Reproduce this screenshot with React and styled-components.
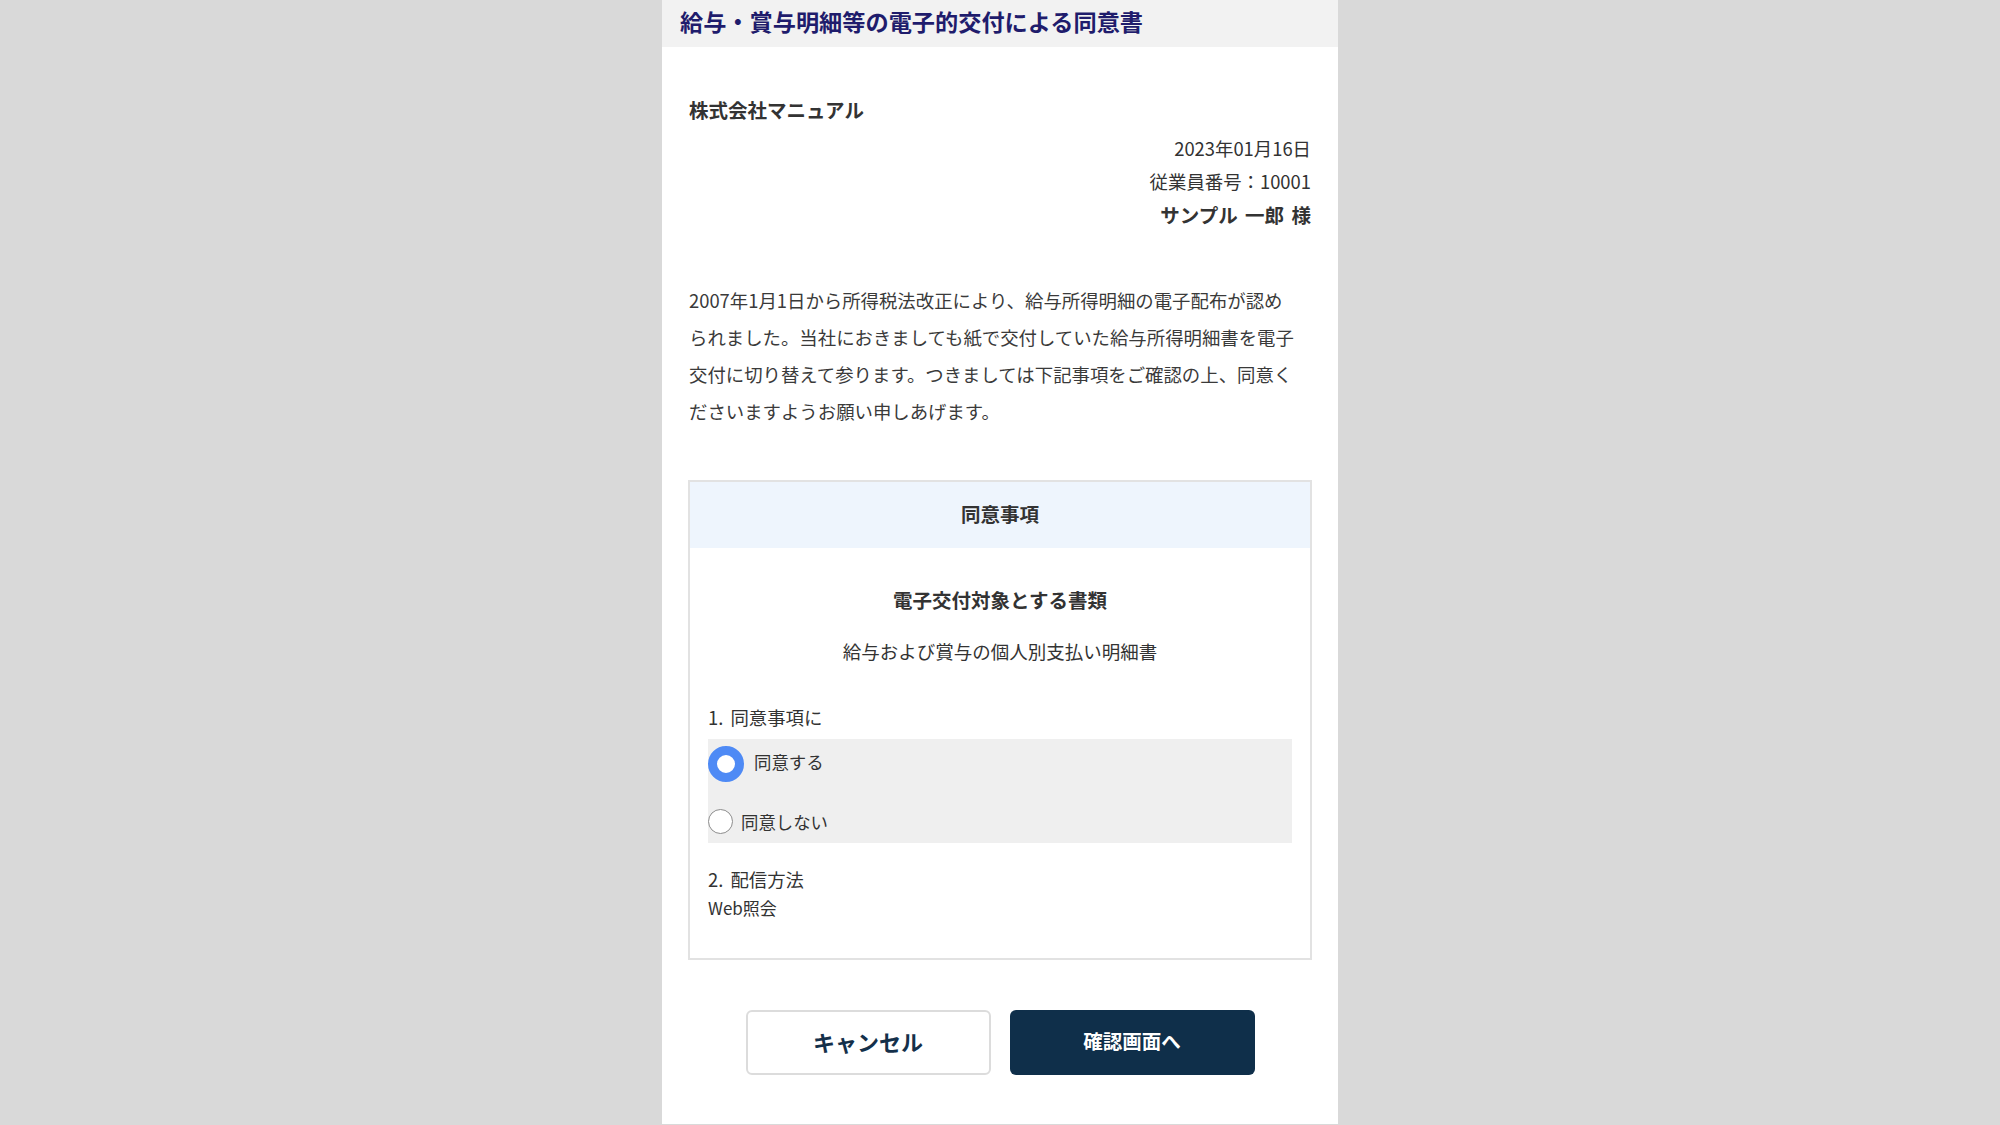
import React from "react";
import styled, { createGlobalStyle } from "styled-components";

const GlobalStyle = createGlobalStyle`
  html, body {
    margin: 0;
    padding: 0;
    background: #d9d9d9;
  }
  body {
    font-family: "Noto Sans CJK JP", "Noto Sans", sans-serif;
    color: #333333;
  }
`;

const Page = styled.div`
  display: flex;
  justify-content: center;
`;

const Sheet = styled.div`
  width: 676px;
  background: #ffffff;
  display: flex;
  flex-direction: column;
`;

const Header = styled.header`
  background: #f2f2f2;
  padding: 7px 18px 12px;
  height: 47px;
  box-sizing: border-box;
`;

const Title = styled.h1`
  margin: 0;
  font-size: 23.2px;
  line-height: 28px;
  font-weight: 700;
  color: #1f1c6c;
`;

const Body = styled.main`
  padding: 48px 27px 49px 27px;
  display: flex;
  flex-direction: column;
`;

const Company = styled.div`
  font-size: 19.5px;
  font-weight: 700;
  line-height: 30px;
  color: #333;
`;

const Recipient = styled.div`
  margin-top: 7px;
  display: flex;
  flex-direction: column;
  align-items: flex-end;
`;

const RecipientLine = styled.div`
  font-size: ${(p) => (p.$strong ? "19.5px" : "18.4px")};
  font-weight: ${(p) => (p.$strong ? 700 : 400)};
  line-height: 33px;
  color: #333;
  word-spacing: ${(p) => (p.$strong ? "3px" : "0")};
`;

const Lead = styled.p`
  margin: 51px 0 0;
  font-size: 18.4px;
  line-height: 37px;
  color: #3a3a3a;
`;

const Box = styled.section`
  margin: 50px -1px 0 -1px;
  border: 2px solid #e2e2e2;
`;

const BoxHead = styled.div`
  background: #eef5fd;
  height: 66px;
  display: flex;
  align-items: center;
  justify-content: center;
  font-size: 19.5px;
  font-weight: 700;
  color: #333;
  padding-bottom: 3px;
  box-sizing: border-box;
`;

const BoxBody = styled.div`
  padding: 37px 18px 37px;
  display: flex;
  flex-direction: column;
`;

const Center = styled.div`
  text-align: center;
  font-size: ${(p) => (p.$strong ? "19.5px" : "18.5px")};
  font-weight: ${(p) => (p.$strong ? 700 : 400)};
  line-height: 30px;
  margin-top: ${(p) => p.$gap || 0}px;
  color: #333;
`;

const ItemLabel = styled.div`
  font-size: 18.4px;
  line-height: 30px;
  margin-top: ${(p) => p.$gap || 0}px;
  color: #333;
  word-spacing: 3px;
`;

const Choices = styled.div`
  margin-top: 7px;
  background: #efefef;
  padding: 7px 0 9px;
  display: flex;
  flex-direction: column;
`;

const Choice = styled.label`
  display: flex;
  align-items: ${(p) => (p.$first ? "flex-start" : "center")};
  gap: ${(p) => (p.$first ? "10px" : "8px")};
  margin-top: ${(p) => (p.$first ? 0 : 27)}px;
  cursor: pointer;
`;

const Dot = styled.span`
  flex: none;
  box-sizing: border-box;
  border-radius: 50%;
  background: #ffffff;
  width: ${(p) => (p.$checked ? 36 : 25)}px;
  height: ${(p) => (p.$checked ? 36 : 25)}px;
  border: ${(p) => (p.$checked ? "9px solid #4e8af5" : "1px solid #8d8d8d")};
`;

const ChoiceText = styled.span`
  font-size: 17.4px;
  line-height: 18px;
  margin-top: ${(p) => p.$offset || 0}px;
  color: #333;
`;

const Plain = styled.div`
  font-size: 17px;
  line-height: 26px;
  margin-top: 1px;
  color: #333;
`;

const Actions = styled.div`
  margin-top: 50px;
  display: flex;
  justify-content: center;
  gap: 19px;
`;

const Button = styled.button`
  width: 245px;
  height: 65px;
  border-radius: 6px;
  font-family: inherit;
  font-weight: 700;
  cursor: pointer;
  box-sizing: border-box;
  padding: 0 0 4px;
  border: ${(p) => (p.$primary ? "none" : "2px solid #dcdcdc")};
  background: ${(p) => (p.$primary ? "#0f2f4a" : "#ffffff")};
  color: ${(p) => (p.$primary ? "#ffffff" : "#14304a")};
  font-size: ${(p) => (p.$primary ? "19.5px" : "22px")};
`;

export default function App() {
  const [agree, setAgree] = React.useState(true);

  return (
    <Page>
      <GlobalStyle />
      <Sheet>
        <Header>
          <Title>給与・賞与明細等の電子的交付による同意書</Title>
        </Header>
        <Body>
          <Company>株式会社マニュアル</Company>
          <Recipient>
            <RecipientLine>2023年01月16日</RecipientLine>
            <RecipientLine>従業員番号：10001</RecipientLine>
            <RecipientLine $strong>サンプル 一郎 様</RecipientLine>
          </Recipient>
          <Lead>
            2007年1月1日から所得税法改正により、給与所得明細の電子配布が認め
            <br />
            られました。当社におきましても紙で交付していた給与所得明細書を電子
            <br />
            交付に切り替えて参ります。つきましては下記事項をご確認の上、同意く
            <br />
            ださいますようお願い申しあげます。
          </Lead>
          <Box>
            <BoxHead>同意事項</BoxHead>
            <BoxBody>
              <Center $strong>電子交付対象とする書類</Center>
              <Center $gap={21}>給与および賞与の個人別支払い明細書</Center>
              <ItemLabel $gap={36}>1. 同意事項に</ItemLabel>
              <Choices>
                <Choice $first onClick={() => setAgree(true)}>
                  <Dot $checked={agree} />
                  <ChoiceText $offset={7}>同意する</ChoiceText>
                </Choice>
                <Choice onClick={() => setAgree(false)}>
                  <Dot $checked={!agree} />
                  <ChoiceText>同意しない</ChoiceText>
                </Choice>
              </Choices>
              <ItemLabel $gap={21}>2. 配信方法</ItemLabel>
              <Plain>Web照会</Plain>
            </BoxBody>
          </Box>
          <Actions>
            <Button>キャンセル</Button>
            <Button $primary>確認画面へ</Button>
          </Actions>
        </Body>
      </Sheet>
    </Page>
  );
}
